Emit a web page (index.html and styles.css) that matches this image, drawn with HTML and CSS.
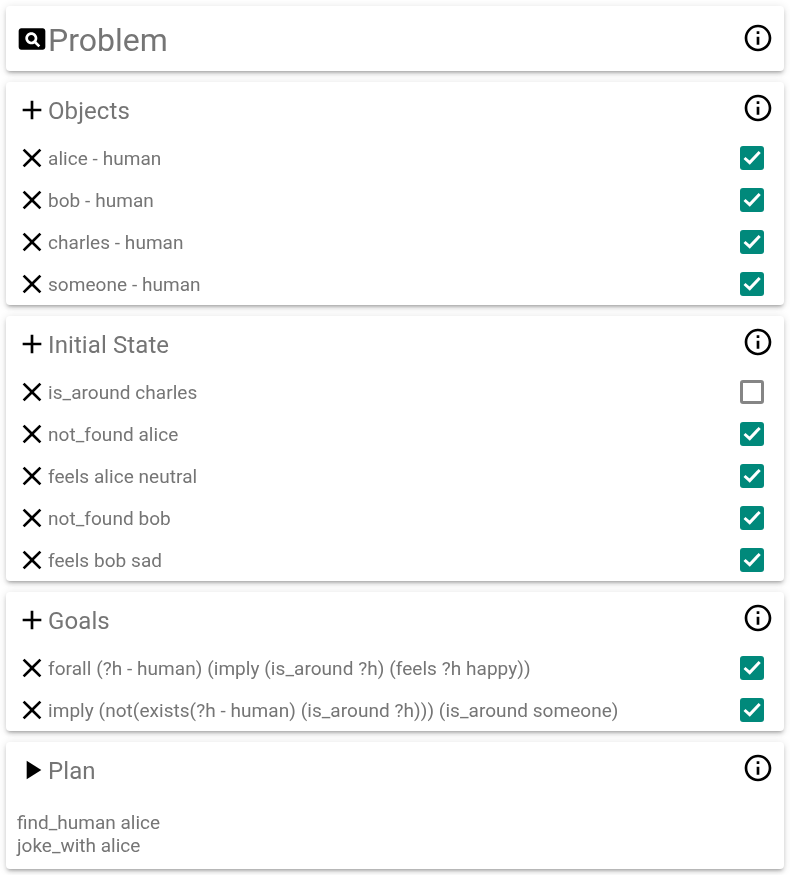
FILE: index.html
```html
<!doctype html>
<html>
<head>
    <meta charset="UTF-8">
    <title>Problem</title>
    <link rel="stylesheet" href="styles.css">
</head>
<body>
<svg class="defs" width="0" height="0">
    <symbol id="i-page" viewBox="0 0 24 24"><path d="M11.5 9C10.12 9 9 10.12 9 11.5s1.12 2.5 2.5 2.5 2.5-1.12 2.5-2.5S12.88 9 11.5 9zM20 4H4c-1.1 0-2 .9-2 2v12c0 1.1.9 2 2 2h16c1.1 0 2-.9 2-2V6c0-1.1-.9-2-2-2zm-3.21 14.21l-2.91-2.91c-.69.44-1.51.7-2.39.7C9.01 16 7 13.99 7 11.5S9.01 7 11.5 7 16 9.01 16 11.5c0 .88-.26 1.69-.7 2.39l2.91 2.9-1.42 1.42z"/></symbol>
    <symbol id="i-info" viewBox="0 0 24 24"><path d="M11 17h2v-6h-2v6zm1-15C6.48 2 2 6.48 2 12s4.48 10 10 10 10-4.48 10-10S17.52 2 12 2zm0 18c-4.41 0-8-3.59-8-8s3.59-8 8-8 8 3.59 8 8-3.59 8-8 8zM11 9h2V7h-2v2z"/></symbol>
    <symbol id="i-add" viewBox="0 0 24 24"><path d="M19 13h-6v6h-2v-6H5v-2h6V5h2v6h6v2z"/></symbol>
    <symbol id="i-close" viewBox="0 0 24 24"><path d="M19 6.41L17.59 5 12 10.59 6.41 5 5 6.41 10.59 12 5 17.59 6.41 19 12 13.41 17.59 19 19 17.59 13.41 12z"/></symbol>
    <symbol id="i-play" viewBox="0 0 24 24"><path d="M8 5v14l11-7z"/></symbol>
    <symbol id="i-check" viewBox="0 0 24 24"><path d="M4.5 12l5.2 4.6L19.7 6" fill="none" stroke="#fff" stroke-width="3"/></symbol>
</svg>

<div class="m-card m-top">
    <svg class="icon"><use href="#i-page"/></svg>
    <h1 class="page-title">Problem</h1>
    <svg class="icon info"><use href="#i-info"/></svg>
</div>

<div class="m-card">
    <div class="hd">
        <svg class="icon"><use href="#i-add"/></svg>
        <h2>Objects</h2>
        <svg class="icon info"><use href="#i-info"/></svg>
    </div>
    <ul class="bd">
        <li><svg class="icon"><use href="#i-close"/></svg><span>alice - human</span><i class="box on"><svg><use href="#i-check"/></svg></i></li>
        <li><svg class="icon"><use href="#i-close"/></svg><span>bob - human</span><i class="box on"><svg><use href="#i-check"/></svg></i></li>
        <li><svg class="icon"><use href="#i-close"/></svg><span>charles - human</span><i class="box on"><svg><use href="#i-check"/></svg></i></li>
        <li><svg class="icon"><use href="#i-close"/></svg><span>someone - human</span><i class="box on"><svg><use href="#i-check"/></svg></i></li>
    </ul>
</div>

<div class="m-card">
    <div class="hd">
        <svg class="icon"><use href="#i-add"/></svg>
        <h2>Initial State</h2>
        <svg class="icon info"><use href="#i-info"/></svg>
    </div>
    <ul class="bd">
        <li><svg class="icon"><use href="#i-close"/></svg><span>is_around charles</span><i class="box"></i></li>
        <li><svg class="icon"><use href="#i-close"/></svg><span>not_found alice</span><i class="box on"><svg><use href="#i-check"/></svg></i></li>
        <li><svg class="icon"><use href="#i-close"/></svg><span>feels alice neutral</span><i class="box on"><svg><use href="#i-check"/></svg></i></li>
        <li><svg class="icon"><use href="#i-close"/></svg><span>not_found bob</span><i class="box on"><svg><use href="#i-check"/></svg></i></li>
        <li><svg class="icon"><use href="#i-close"/></svg><span>feels bob sad</span><i class="box on"><svg><use href="#i-check"/></svg></i></li>
    </ul>
</div>

<div class="m-card">
    <div class="hd">
        <svg class="icon"><use href="#i-add"/></svg>
        <h2>Goals</h2>
        <svg class="icon info"><use href="#i-info"/></svg>
    </div>
    <ul class="bd">
        <li><svg class="icon"><use href="#i-close"/></svg><span>forall (?h - human) (imply (is_around ?h) (feels ?h happy))</span><i class="box on"><svg><use href="#i-check"/></svg></i></li>
        <li><svg class="icon"><use href="#i-close"/></svg><span>imply (not(exists(?h - human) (is_around ?h))) (is_around someone)</span><i class="box on"><svg><use href="#i-check"/></svg></i></li>
    </ul>
</div>

<div class="m-card">
    <div class="hd">
        <svg class="icon"><use href="#i-play"/></svg>
        <h2>Plan</h2>
        <svg class="icon info"><use href="#i-info"/></svg>
    </div>
    <p class="plan">find_human alice<br>joke_with alice</p>
</div>
</body>
</html>
```

FILE: styles.css
```css
html, body, h1, h2, ul, p { margin: 0; padding: 0; }
ul { list-style: none; }
body { padding: 6px; display: flex; flex-direction: column; gap: 11px; background: #fff; color: #757575; font-family: Roboto, "Liberation Sans", sans-serif; }
.defs { position: absolute; }
.icon { display: block; flex: none; width: 32px; height: 32px; fill: #000; }
.info { margin-left: auto; margin-top: -1px; }

.m-card { padding: 0 10px; background: #fff; border-radius: 4px; box-shadow: 0 3px 3px -2px rgba(0,0,0,.2), 0 3px 4px 0 rgba(0,0,0,.14), 0 1px 8px 0 rgba(0,0,0,.12); will-change: transform; }
.m-top { display: flex; height: 65px; padding-top: 17px; box-sizing: border-box; }
.page-title { font-size: 32px; line-height: 34px; font-weight: 400; }

.hd { display: flex; height: 55px; padding-top: 12px; box-sizing: border-box; }
.hd h2 { font-size: 24px; line-height: 34px; font-weight: 400; letter-spacing: .1px; }
.hd .info { margin-top: -2px; }

.bd li { display: flex; align-items: center; height: 42px; font-size: 19px; letter-spacing: .05px; }
.box { display: block; flex: none; box-sizing: border-box; width: 24px; height: 24px; margin-left: auto; margin-right: 10px; border: 3px solid #858585; border-radius: 3px; }
.box.on { background: #00897b; border: 0; }
.box svg { display: block; width: 24px; height: 24px; }

.plan { padding: 14px 1px 12px; font-size: 19px; line-height: 23px; }
```
